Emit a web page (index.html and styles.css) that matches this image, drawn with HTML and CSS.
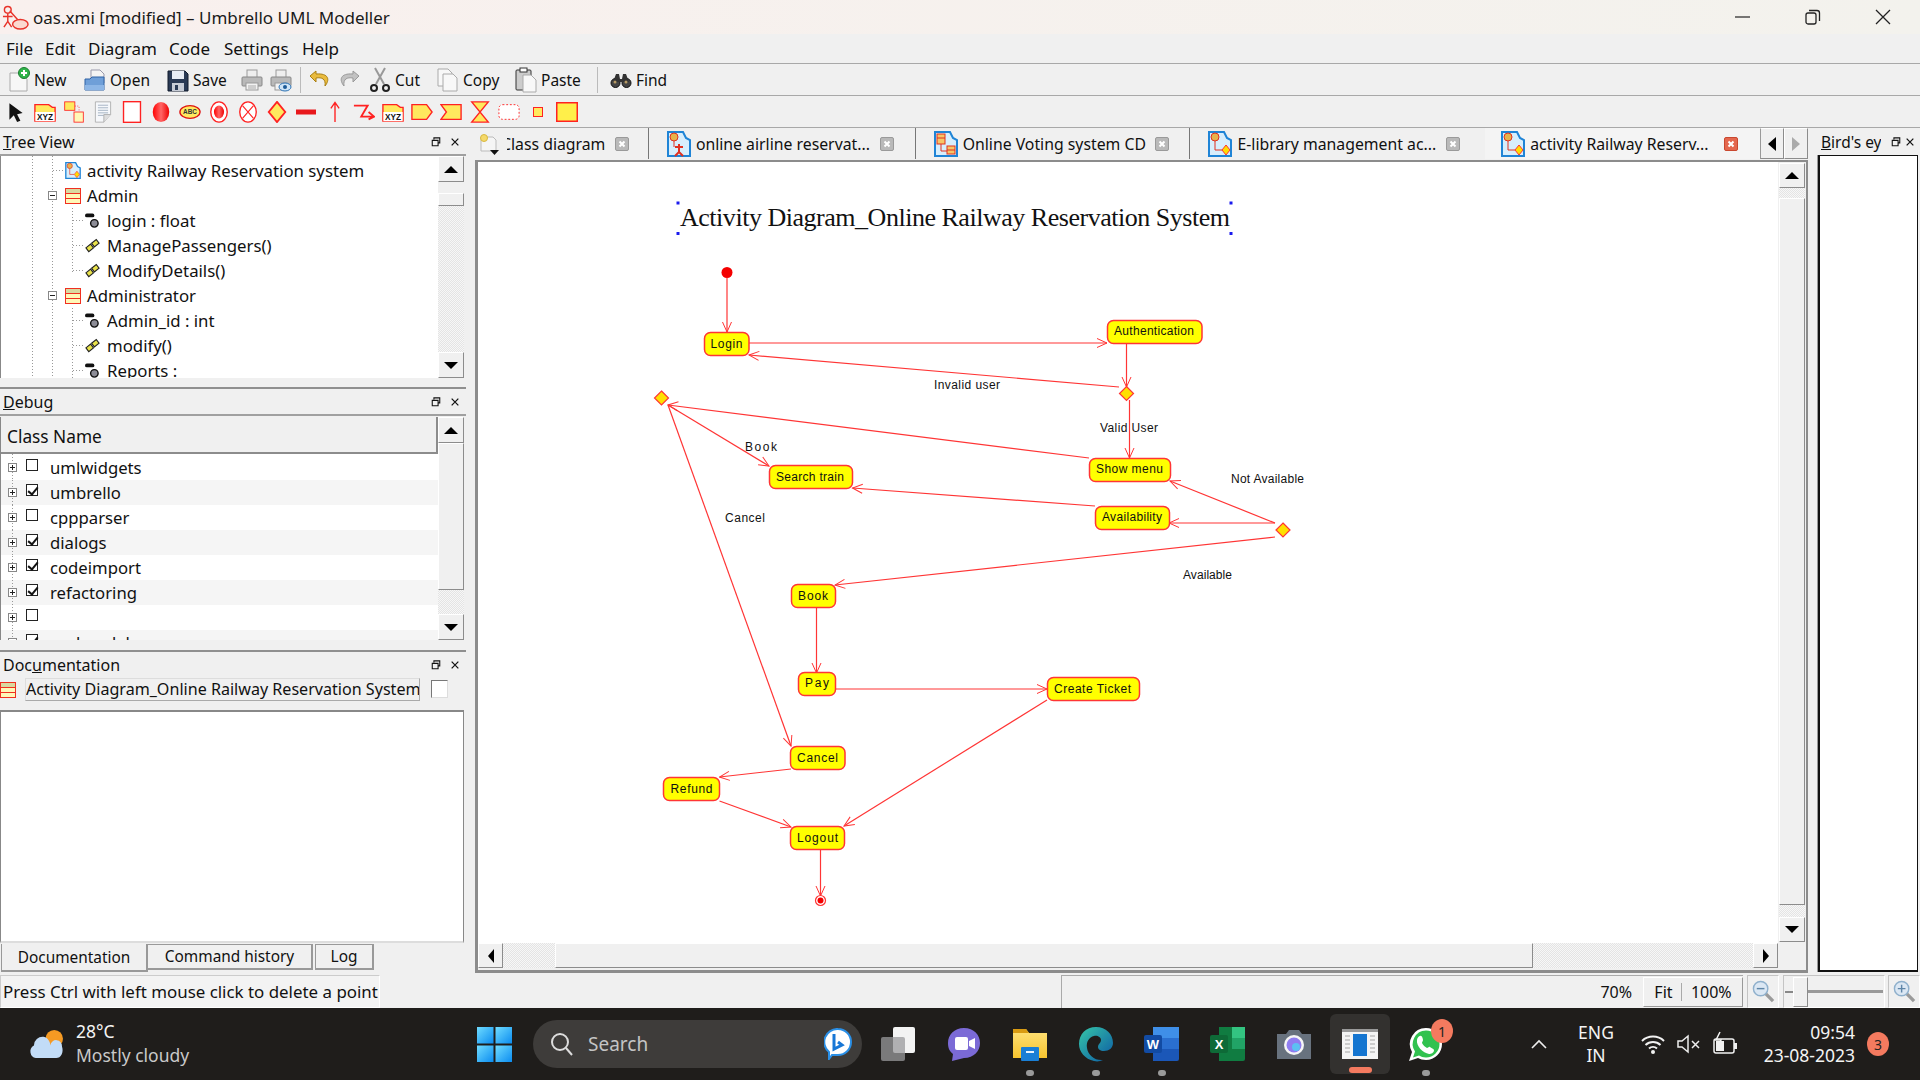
FILE: index.html
```html
<!DOCTYPE html>
<html lang="en">
<head>
<meta charset="utf-8">
<title>oas.xmi [modified] – Umbrello UML Modeller</title>
<link rel="stylesheet" href="styles.css">
</head>
<body>
<svg class="defs" width="0" height="0" aria-hidden="true">
  <defs>
    <linearGradient id="redball" x1="0" x2="1" y1="0" y2="0"><stop offset="0" stop-color="#f00"/><stop offset=".5" stop-color="#f66"/><stop offset="1" stop-color="#e00"/></linearGradient>
    <linearGradient id="folder" x1="0" x2="0" y1="0" y2="1"><stop offset="0" stop-color="#ffe27a"/><stop offset="1" stop-color="#f7c42f"/></linearGradient>
    <linearGradient id="edge" x1="0" x2="1" y1="0" y2="1"><stop offset="0" stop-color="#36c7a8"/><stop offset="1" stop-color="#0c59a4"/></linearGradient>
    <linearGradient id="winlogo" x1="0" x2="1" y1="0" y2="1"><stop offset="0" stop-color="#6fdcff"/><stop offset="1" stop-color="#0b8cf0"/></linearGradient>
    <symbol id="i-activity" viewBox="0 0 24 26">
      <path d="M1 1h15l3 6 4 2v16H1z" fill="#d8eefc" stroke="#1f84d6" stroke-width="2"/>
      <circle cx="7" cy="6" r="4" fill="#e8b34a" stroke="#e03020"/><path d="M7 10v9h7" fill="none" stroke="#e03020"/>
      <path d="M18 14l4 5-4 5-4-5z" fill="#fd0" stroke="#f33"/>
    </symbol>
    <symbol id="i-airline" viewBox="0 0 24 26">
      <path d="M1 1h15l3 6 4 2v16H1z" fill="#d8eefc" stroke="#1f84d6" stroke-width="2"/>
      <circle cx="7" cy="6" r="4" fill="#e8b34a" stroke="#e03020"/><path d="M7 10v6" fill="none" stroke="#e03020"/>
      <path d="M12 13v8M8 16h8M12 21l-4 4M12 21l4 4" fill="none" stroke="#e03020" stroke-width="2"/>
    </symbol>
    <symbol id="i-classdiag" viewBox="0 0 24 26">
      <path d="M1 1h15l3 6 4 2v16H1z" fill="#d8eefc" stroke="#1f84d6" stroke-width="2"/>
      <rect x="3" y="3" width="8" height="10" fill="#f6c667" stroke="#e03020"/><path d="M3 7h8M7 13v7h6" fill="none" stroke="#e03020"/>
      <rect x="13" y="15" width="8" height="8" fill="#f6c667" stroke="#e03020"/><path d="M13 19h8" stroke="#e03020"/>
    </symbol>
    <symbol id="i-class" viewBox="0 0 16 16">
      <rect x=".5" y=".5" width="15" height="15" fill="#fff8b8" stroke="#f03020"/>
      <rect x="1" y="1" width="14" height="4" fill="#d9d9a0"/><path d="M1 5.500h14M1 10.500h14" stroke="#f03020"/>
    </symbol>
    <symbol id="i-attr" viewBox="0 0 16 16">
      <rect x="0" y="0" width="10" height="4" rx="2" fill="#111"/><circle cx="10" cy="10.500" r="4" fill="#8c8c96" stroke="#111" stroke-width="1.500"/>
    </symbol>
    <symbol id="i-op" viewBox="0 0 16 16">
      <path d="M1 10l5-4 3 4-5 4z" fill="#e9e24a" stroke="#222" stroke-width="1.200"/><path d="M7 5l5-4 3 4-5 4z" fill="#e9e24a" stroke="#222" stroke-width="1.200"/>
    </symbol>
    <symbol id="i-xyz" viewBox="0 0 24 22">
      <path d="M1 3h15l4 3h3v15H1z" fill="#ffe95e" stroke="#f22" stroke-width="1.500"/>
      <rect x="1.500" y="11" width="21" height="10" fill="#fff"/>
      <text x="12" y="19.500" class="xyz">XYZ</text>
    </symbol>
    <symbol id="i-close" viewBox="0 0 14 14">
      <rect x=".5" y=".5" width="13" height="13" rx="1.500" fill="#b9b9b9" stroke="#9a9a9a"/>
      <path d="M4.500 4.500l5 5M9.500 4.500l-5 5" stroke="#fff" stroke-width="2"/>
    </symbol>
    <symbol id="i-float" viewBox="0 0 12 12">
      <path d="M3.500 3V1h7v6H8.500M1.500 4h7v6.500h-7z" fill="none" stroke="#111" stroke-width="1.300"/>
    </symbol>
    <symbol id="i-x" viewBox="0 0 12 12">
      <path d="M2 2l8 8M10 2l-8 8" stroke="#111" stroke-width="1.500"/>
    </symbol>
  </defs>
</svg>

<header class="titlebar">
  <svg class="app-icon" viewBox="0 0 28 28"><circle cx="6" cy="6" r="3.500" fill="none" stroke="#e8332a" stroke-width="1.500"/><path d="M6 10v8M1 13h10M6 18l-4 6M6 18l4 6M8 7l9 10" fill="none" stroke="#e8332a" stroke-width="1.500"/><ellipse cx="19" cy="21" rx="8" ry="5" fill="#fbd9d0" stroke="#e8332a" stroke-width="1.500"/></svg>
  <span class="title-text">oas.xmi [modified] – Umbrello UML Modeller</span>
  <div class="winbtns">
    <svg class="winbtn" viewBox="0 0 16 16"><path d="M0 8h15" stroke="#222" stroke-width="1.200"/></svg>
    <svg class="winbtn" viewBox="0 0 16 16"><rect x="1" y="4" width="10" height="11" rx="2" fill="none" stroke="#222" stroke-width="1.300"/><path d="M4 1.500h8a2.500 2.500 0 0 1 2.500 2.500v8" fill="none" stroke="#222" stroke-width="1.300"/></svg>
    <svg class="winbtn" viewBox="0 0 16 16"><path d="M1 1l14 14M15 1L1 15" stroke="#222" stroke-width="1.300"/></svg>
  </div>
</header>

<nav class="menubar">
  <span class="m-file">File</span><span class="m-edit">Edit</span><span class="m-diagram">Diagram</span><span class="m-code">Code</span><span class="m-settings">Settings</span><span>Help</span>
</nav>

<div class="toolbar">
  <div class="tb w76"><svg class="tbi" viewBox="0 0 22 26"><path d="M2 6h11l6 6v12H2z" fill="#f7f7f7" stroke="#aaa"/><circle cx="16" cy="6" r="5.500" fill="#2fb44a" stroke="#1a7d2f"/><path d="M13 6h6M16 3v6" stroke="#fff" stroke-width="2"/></svg><span>New</span></div>
  <div class="tb w83"><svg class="tbi" viewBox="0 0 22 26"><path d="M7 3h9l4 4v9H7z" fill="#f4f4f4" stroke="#99a"/><path d="M1 12h5l2-2h12v13H1z" fill="#6f9fd8" stroke="#2f62a5"/><path d="M1 18h19v5H1z" fill="#8db6e6"/></svg><span>Open</span></div>
  <div class="tb w74"><svg class="tbi" viewBox="0 0 22 26"><path d="M1 4h17l3 3v17H1z" fill="#2a3a55" stroke="#111b2c"/><rect x="5" y="4" width="12" height="8" fill="#e8edf5"/><rect x="5" y="16" width="12" height="8" fill="#c7ccd6"/><rect x="8" y="18" width="3" height="5" fill="#2a3a55"/></svg><span>Save</span></div>
  <div class="tb w29"><svg class="tbi" viewBox="0 0 22 26"><rect x="6" y="3" width="10" height="8" fill="#eee" stroke="#999"/><rect x="1" y="10" width="20" height="9" rx="1" fill="#b9b9b9" stroke="#888"/><rect x="5" y="16" width="12" height="7" fill="#f2f2f2" stroke="#999"/><path d="M7 19h8M7 21h8" stroke="#aaa"/></svg></div>
  <div class="tb w30"><svg class="tbi" viewBox="0 0 22 26"><rect x="6" y="3" width="10" height="8" fill="#eee" stroke="#999"/><rect x="1" y="10" width="20" height="9" rx="1" fill="#b9b9b9" stroke="#888"/><rect x="5" y="16" width="12" height="7" fill="#f2f2f2" stroke="#999"/><ellipse cx="15" cy="20" rx="6" ry="4" fill="#cfe4f6" stroke="#2b72b5"/><circle cx="15" cy="20" r="2" fill="#1d5a96"/></svg></div>
  <div class="tb-sep"></div>
  <div class="tb w29"><svg class="tbi" viewBox="0 0 22 26"><path d="M7 4L1 9l6 6v-4c6-1 10 1 9 8 5-6 4-13-9-12z" fill="#e9bb3e" stroke="#a97f12"/></svg></div>
  <div class="tb w31"><svg class="tbi" viewBox="0 0 22 26"><path d="M15 4l6 5-6 6v-4C9 10 5 12 6 19 1 13 2 6 15 7z" fill="#c2c2c2" stroke="#999"/></svg></div>
  <div class="tb w68"><svg class="tbi" viewBox="0 0 22 26"><path d="M6 1l9 16M16 1L7 17" stroke="#999" stroke-width="2"/><circle cx="5" cy="21" r="3" fill="none" stroke="#222" stroke-width="2"/><circle cx="17" cy="21" r="3" fill="none" stroke="#222" stroke-width="2"/></svg><span>Cut</span></div>
  <div class="tb w78"><svg class="tbi" viewBox="0 0 22 26"><path d="M1 2h10l4 4v13H1z" fill="#f8f8f8" stroke="#aaa"/><path d="M6 7h10l4 4v13H6z" fill="#f8f8f8" stroke="#aaa"/></svg><span>Copy</span></div>
  <div class="tb w82"><svg class="tbi" viewBox="0 0 22 26"><rect x="1" y="3" width="15" height="20" rx="1" fill="#ccc" stroke="#333"/><rect x="5" y="1" width="7" height="4" fill="#fff" stroke="#333"/><path d="M8 8h8l5 5v12H8z" fill="#f8f8f8" stroke="#aaa"/></svg><span>Paste</span></div>
  <div class="tb-sep"></div>
  <div class="tb w70"><svg class="tbi" viewBox="0 0 22 26"><circle cx="5.500" cy="16" r="4.500" fill="#444" stroke="#111"/><circle cx="16.500" cy="16" r="4.500" fill="#444" stroke="#111"/><path d="M3 15l3-8h3l1 5h2l1-5h3l3 8" fill="#333"/><circle cx="5" cy="15" r="1.500" fill="#b79a64"/><circle cx="16" cy="15" r="1.500" fill="#b79a64"/></svg><span>Find</span></div>
</div>

<div class="toolbar two">
  <div class="tool"><svg viewBox="0 0 16 20" class="ti"><path d="M2 2l12 9-5 1 3 6-3 1-3-6-4 4z" fill="#111"/></svg></div>
  <div class="tool"><svg class="ti"><use href="#i-xyz"/></svg></div>
  <div class="tool"><svg viewBox="0 0 24 26" class="ti"><rect x="1" y="1" width="12" height="10" fill="#ffe95e" stroke="#f22"/><rect x="12" y="13" width="11" height="12" fill="#fff8b8" stroke="#f22"/><path d="M13 6h5v7" fill="none" stroke="#f22" stroke-dasharray="1 2"/></svg></div>
  <div class="tool"><svg viewBox="0 0 20 26" class="ti"><path d="M1 1h18v15l-8 9H1z" fill="#f6f8fb" stroke="#aaa"/><path d="M4 5h12M4 8h12M4 11h12M4 14h12M4 17h7" stroke="#9ab"/><path d="M19 16h-8v9" fill="#ddd" stroke="#aaa"/></svg></div>
  <div class="tool"><svg viewBox="0 0 20 24" class="ti"><rect x=".75" y=".75" width="18.500" height="22.500" fill="#fff" stroke="#f22" stroke-width="1.500"/></svg></div>
  <div class="tool"><svg viewBox="0 0 20 24" class="ti"><ellipse cx="10" cy="12" rx="9" ry="11" fill="url(#redball)"/></svg></div>
  <div class="tool"><svg viewBox="0 0 24 16" class="ti"><ellipse cx="12" cy="8" rx="11" ry="7" fill="#ffe95e" stroke="#d11" stroke-width="1.500"/><text x="12" y="10.500" class="abc">ABC</text></svg></div>
  <div class="tool"><svg viewBox="0 0 20 24" class="ti"><ellipse cx="10" cy="12" rx="9" ry="11" fill="#fff" stroke="#f22" stroke-width="1.500"/><ellipse cx="10" cy="12" rx="5.500" ry="7" fill="url(#redball)"/></svg></div>
  <div class="tool"><svg viewBox="0 0 20 24" class="ti"><ellipse cx="10" cy="12" rx="9" ry="11" fill="#fff" stroke="#f22" stroke-width="1.500"/><path d="M4 5l12 14M16 5L4 19" stroke="#f22" stroke-width="1.200"/></svg></div>
  <div class="tool"><svg viewBox="0 0 20 24" class="ti"><path d="M10 1l9 11-9 11L1 12z" fill="#ffe95e" stroke="#f22" stroke-width="2"/></svg></div>
  <div class="tool"><svg viewBox="0 0 20 8" class="ti-bar"><rect width="20" height="5" y="1.500" fill="#e8181c"/></svg></div>
  <div class="tool"><svg viewBox="0 0 12 24" class="ti"><path d="M6 23V2M1.500 8L6 1.500 10.500 8" fill="none" stroke="#f22" stroke-width="1.500"/></svg></div>
  <div class="tool"><svg viewBox="0 0 24 18" class="ti"><path d="M1 2h15l-7 12h13M17 9l6 5-6 3" fill="none" stroke="#f22" stroke-width="2"/></svg></div>
  <div class="tool"><svg class="ti"><use href="#i-xyz"/></svg></div>
  <div class="tool"><svg viewBox="0 0 24 18" class="ti"><path d="M1 1h16l6 8-6 8H1z" fill="#ffe95e" stroke="#f22" stroke-width="1.500"/></svg></div>
  <div class="tool"><svg viewBox="0 0 24 18" class="ti"><path d="M1 1h22v16H1l6-8z" fill="#ffe95e" stroke="#f22" stroke-width="1.500"/></svg></div>
  <div class="tool"><svg viewBox="0 0 20 24" class="ti"><path d="M1 1h18L1 23h18z" fill="#ffe95e" stroke="#f22" stroke-width="1.500"/></svg></div>
  <div class="tool"><svg viewBox="0 0 24 18" class="ti"><rect x="1" y="1" width="22" height="16" rx="4" fill="#fff" stroke="#f22" stroke-dasharray="2 2"/></svg></div>
  <div class="tool"><svg viewBox="0 0 10 10" class="ti-small"><rect x=".5" y=".5" width="9" height="9" fill="#ffe95e" stroke="#f22"/></svg></div>
  <div class="tool"><svg viewBox="0 0 22 20" class="ti"><rect x=".75" y=".75" width="20.500" height="18.500" fill="#ffef4a" stroke="#f22" stroke-width="1.500"/></svg></div>
</div>

<main class="workspace">
  <aside class="leftcol">
    <section class="dock dock-tree">
      <div class="dock-head"><span class="dock-title"><u>T</u>ree View</span><svg class="dh-i"><use href="#i-float"/></svg><svg class="dh-i"><use href="#i-x"/></svg></div>
      <div class="listbox treebox">
        <div class="listbody tree">
          <div class="tr l1"><i class="tick"></i><svg class="ic"><use href="#i-activity"/></svg><span>activity Railway Reservation system</span></div>
          <div class="tr l1"><b class="exp minus"></b><svg class="ic ic-c"><use href="#i-class"/></svg><span>Admin</span></div>
          <div class="group short">
            <div class="tr l2"><i class="tick"></i><svg class="ic2"><use href="#i-attr"/></svg><span>login : float</span></div>
            <div class="tr l2"><i class="tick"></i><svg class="ic2"><use href="#i-op"/></svg><span>ManagePassengers()</span></div>
            <div class="tr l2"><i class="tick"></i><svg class="ic2"><use href="#i-op"/></svg><span>ModifyDetails()</span></div>
          </div>
          <div class="tr l1"><b class="exp minus"></b><svg class="ic ic-c"><use href="#i-class"/></svg><span>Administrator</span></div>
          <div class="group">
            <div class="tr l2"><i class="tick"></i><svg class="ic2"><use href="#i-attr"/></svg><span>Admin_id : int</span></div>
            <div class="tr l2"><i class="tick"></i><svg class="ic2"><use href="#i-op"/></svg><span>modify()</span></div>
            <div class="tr l2"><i class="tick"></i><svg class="ic2"><use href="#i-attr"/></svg><span>Reports :</span></div>
          </div>
        </div>
        <div class="vbar"><div class="sb-btn up"></div><div class="gap-12"></div><div class="thumb thumb-tree"></div><div class="hatch"></div><div class="sb-btn down"></div></div>
      </div>
    </section>

    <section class="dock dock-debug">
      <div class="dock-head"><span class="dock-title"><u>D</u>ebug</span><svg class="dh-i"><use href="#i-float"/></svg><svg class="dh-i"><use href="#i-x"/></svg></div>
      <div class="listbox debugbox">
        <div class="listbody">
          <div class="colhead">Class Name</div>
          <div class="debugrows">
            <div class="dr"><b class="exp plus"></b><i class="cb"></i><span>umlwidgets</span></div>
            <div class="dr alt"><b class="exp plus"></b><i class="cb on"></i><span>umbrello</span></div>
            <div class="dr"><b class="exp plus"></b><i class="cb"></i><span>cppparser</span></div>
            <div class="dr alt"><b class="exp plus"></b><i class="cb on"></i><span>dialogs</span></div>
            <div class="dr"><b class="exp plus"></b><i class="cb on"></i><span>codeimport</span></div>
            <div class="dr alt"><b class="exp plus"></b><i class="cb on"></i><span>refactoring</span></div>
            <div class="dr"><b class="exp plus"></b><i class="cb"></i><span></span></div>
            <div class="dr alt"><b class="exp plus"></b><i class="cb on"></i><span>umlmodel</span></div>
          </div>
        </div>
        <div class="vbar"><div class="sb-btn up"></div><div class="thumb thumb-debug"></div><div class="hatch"></div><div class="sb-btn down"></div></div>
      </div>
    </section>

    <section class="dock dock-doc">
      <div class="dock-head"><span class="dock-title">Doc<u>u</u>mentation</span><svg class="dh-i"><use href="#i-float"/></svg><svg class="dh-i"><use href="#i-x"/></svg></div>
      <div class="docline"><svg class="ic-doc"><use href="#i-class"/></svg><span class="docfield">Activity Diagram_Online Railway Reservation System</span><i class="doccheck"></i></div>
      <div class="docbox"></div>
      <div class="bottomtabs"><span class="btab active">Documentation</span><span class="btab ch">Command history</span><span class="btab log">Log</span></div>
    </section>
  </aside>

  <section class="center">
    <div class="tabbar">
      <div class="dtab t1"><span class="dtab-text">Class diagram</span><svg class="cl"><use href="#i-close"/></svg>
        <div class="corner"><svg viewBox="0 0 22 22" class="corner-i"><path d="M2 4h12l3 3v11H2z" fill="#f5f5f5" stroke="#bbb"/><circle cx="5" cy="5" r="3.500" fill="#f5d96a" stroke="#d8b840"/><path d="M11 17h9l-4.500 5z" fill="#111"/></svg></div>
      </div>
      <div class="dtab t2"><svg class="di"><use href="#i-airline"/></svg><span class="dtab-text">online airline reservat...</span><svg class="cl"><use href="#i-close"/></svg></div>
      <div class="dtab t3"><svg class="di"><use href="#i-classdiag"/></svg><span class="dtab-text">Online Voting system CD</span><svg class="cl"><use href="#i-close"/></svg></div>
      <div class="dtab t4"><svg class="di"><use href="#i-activity"/></svg><span class="dtab-text">E-library management ac...</span><svg class="cl"><use href="#i-close"/></svg></div>
      <div class="dtab t5"><svg class="di"><use href="#i-activity"/></svg><span class="dtab-text">activity Railway Reserv...</span><svg class="cl red" viewBox="0 0 14 14"><rect x=".5" y=".5" width="13" height="13" rx="1.500" fill="#e4674e" stroke="#c9482f"/><path d="M4.500 4.500l5 5M9.500 4.500l-5 5" stroke="#fff" stroke-width="2"/></svg></div>
      <div class="tabnav"><div class="navbtn"><i class="tri-l"></i></div><div class="navbtn"><i class="tri-r off"></i></div></div>
    </div>
    <div class="canvasframe">
      <div class="canvas">
        <svg class="diagram" viewBox="478 162 1300 781" width="1300" height="781">
          <defs>
            <marker id="arr" markerWidth="12" markerHeight="12" refX="11" refY="6" orient="auto" markerUnits="userSpaceOnUse"><path d="M1 1.500L11 6 1 10.500" fill="none" stroke="#ff3535" stroke-width="1"/></marker>
          </defs>
          <text x="680" y="226" class="d-title" textLength="550">Activity Diagram_Online Railway Reservation System</text>
          <g class="handles"><rect x="676.500" y="201.500" width="3" height="3"/><rect x="1229.500" y="201.500" width="3" height="3"/><rect x="676.500" y="232" width="3" height="3"/><rect x="1229.500" y="232" width="3" height="3"/></g>

          <g class="edges">
            <path d="M727 278V332"/><path d="M749 343H1107"/><path d="M1126.500 343V387"/>
            <path d="M1119 387L749 355"/><path d="M1129.500 400V458"/>
            <path d="M1089 458L668 405"/><path d="M668 405L769 466"/>
            <path d="M1095 506L852.500 488"/><path d="M1275 523H1169"/>
            <path d="M1275 523L1170 481"/><path d="M1275 537L835 585"/>
            <path d="M668 405L791 746"/><path d="M816.500 608V673"/>
            <path d="M835.500 689H1047"/><path d="M1047 700L844 826"/>
            <path d="M791 769L719.500 777"/><path d="M719.500 801L791 827"/><path d="M820.500 850V896"/>
          </g>

          <circle cx="727" cy="272.500" r="5.500" class="start"/>
          <circle cx="820.500" cy="900.500" r="5" class="endring"/><circle cx="820.500" cy="900.500" r="3" class="start"/>

          <g class="diamonds">
            <path d="M1126.500 386.500l7 7-7 7-7-7z"/><path d="M661.500 391l7 7-7 7-7-7z"/><path d="M1283 523l7 7-7 7-7-7z"/>
          </g>

          <g class="nodes">
            <rect x="704.500" y="332.500" width="44.500" height="23" rx="6"/>
            <rect x="1107.500" y="320.500" width="94.500" height="23" rx="6"/>
            <rect x="1089.500" y="458.500" width="81" height="23" rx="6"/>
            <rect x="769.500" y="465.500" width="83" height="23" rx="6"/>
            <rect x="1095.500" y="506.500" width="74" height="23" rx="6"/>
            <rect x="791.500" y="584.500" width="44" height="23" rx="6"/>
            <rect x="798.500" y="672.500" width="37" height="23" rx="6"/>
            <rect x="1047.500" y="677.500" width="92" height="23" rx="6"/>
            <rect x="790.500" y="746.500" width="54.500" height="23" rx="6"/>
            <rect x="663.500" y="777.500" width="56" height="23" rx="6"/>
            <rect x="790.500" y="826.500" width="54" height="23" rx="6"/>
          </g>

          <g class="labels">
            <text x="710.500" y="348" textLength="32">Login</text>
            <text x="1114" y="335" textLength="80">Authentication</text>
            <text x="1096" y="473" textLength="67">Show menu</text>
            <text x="776" y="481" textLength="68">Search train</text>
            <text x="1102" y="521" textLength="60">Availability</text>
            <text x="798" y="600" textLength="30">Book</text>
            <text x="805" y="687" textLength="24">Pay</text>
            <text x="1054" y="693" textLength="77">Create Ticket</text>
            <text x="797" y="762" textLength="41">Cancel</text>
            <text x="670.500" y="793" textLength="42">Refund</text>
            <text x="797" y="842" textLength="41">Logout</text>
            <text x="934" y="389" textLength="66">Invalid user</text>
            <text x="1100" y="432" textLength="58">Valid User</text>
            <text x="745" y="451" textLength="32">Book</text>
            <text x="725" y="522" textLength="40">Cancel</text>
            <text x="1231" y="483" textLength="73">Not Available</text>
            <text x="1183" y="579" textLength="49">Available</text>
          </g>
        </svg>
      </div>
      <div class="vbar vbar-main"><div class="sb-btn up"></div><div class="hatch hatch-top"></div><div class="thumb thumb-main"></div><div class="hatch hatch-bottom"></div><div class="sb-btn down"></div></div>
      <div class="hbar"><div class="hbtn"><i class="tri-l small"></i></div><div class="hatch-h"></div><div class="hthumb"></div><div class="hatch-h right"></div><div class="hbtn"><i class="tri-r small"></i></div></div>
    </div>
  </section>

  <aside class="bird">
    <div class="dock-head bird-head"><span class="dock-title bird-title"><u>B</u>ird's ey</span><svg class="dh-i"><use href="#i-float"/></svg><svg class="dh-i"><use href="#i-x"/></svg></div>
    <div class="birdbox"></div>
  </aside>
</main>

<footer class="statusbar">
  <div class="status-msg">Press Ctrl with left mouse click to delete a point</div>
  <div class="status-zoom">
    <span class="pct">70%</span>
    <div class="fitbox"><span>Fit</span><i></i><span>100%</span></div>
  </div>
  <div class="sbox magbox"><svg class="mag" viewBox="0 0 24 24"><path d="M14 14l8 8" stroke="#9a9a9a" stroke-width="3.500"/><circle cx="9" cy="9" r="7.500" fill="#dbe7f3" stroke="#8fb0cc" stroke-width="1.500"/><path d="M5 9h8" stroke="#5f86a8" stroke-width="1.500"/></svg></div>
  <div class="sbox slider"><i class="slider-minus"></i><i class="slider-handle"></i><i class="slider-line"></i></div>
  <div class="sbox magbox"><svg class="mag" viewBox="0 0 24 24"><path d="M14 14l8 8" stroke="#9a9a9a" stroke-width="3.500"/><circle cx="9" cy="9" r="7.500" fill="#dbe7f3" stroke="#8fb0cc" stroke-width="1.500"/><path d="M5 9h8M9 5v8" stroke="#5f86a8" stroke-width="1.500"/></svg></div>
</footer>

<div class="taskbar">
  <div class="weather">
    <svg class="w-icon" viewBox="0 0 38 32"><circle cx="27" cy="10" r="9" fill="#f59a23"/><path d="M8 30a7 7 0 0 1-2-13 9 9 0 0 1 10-9c5 1 7 6 7 9a6 6 0 0 1 12 1c2 6-1 12-6 12z" fill="#c2dcf7"/></svg>
    <div class="w-text"><span>28°C</span><span class="w-desc">Mostly cloudy</span></div>
  </div>
  <svg class="winlogo" viewBox="0 0 35 35"><rect width="16.500" height="16.500" fill="url(#winlogo)"/><rect x="18.500" width="16.500" height="16.500" fill="url(#winlogo)"/><rect y="18.500" width="16.500" height="16.500" fill="url(#winlogo)"/><rect x="18.500" y="18.500" width="16.500" height="16.500" fill="url(#winlogo)"/></svg>
  <div class="searchpill">
    <svg class="s-icon" viewBox="0 0 24 24"><circle cx="10" cy="10" r="8" fill="none" stroke="#ddd" stroke-width="2"/><path d="M16 16l6 7" stroke="#ddd" stroke-width="2"/></svg>
    <span class="s-text">Search</span>
    <svg class="s-bing" viewBox="0 0 28 32"><path d="M14 1a13 13 0 0 1 0 26H8l-3 4v-7A13 13 0 0 1 14 1z" fill="#fff" stroke="#2a8fe6" stroke-width="2"/><path d="M10 6v15l8-4-4-3" fill="none" stroke="#1877d6" stroke-width="3"/></svg>
  </div>
  <div class="apps">
    <div class="app"><svg class="a-i" viewBox="0 0 36 36"><rect x="13" y="1" width="22" height="26" rx="2" fill="#f3f3f3"/><rect x="1" y="11" width="24" height="24" rx="2" fill="#9a9a9c" opacity=".75"/></svg></div>
    <div class="app"><svg class="a-i" viewBox="0 0 36 36"><path d="M18 2c10 0 16 7 16 15s-6 15-16 15l-12 3 1-7C3 25 2 21 2 17 2 9 8 2 18 2z" fill="#7b6ad6"/><rect x="9" y="11" width="13" height="13" rx="2" fill="#fff"/><path d="M23 15l6-3v11l-6-3z" fill="#fff"/></svg></div>
    <div class="app dotted"><svg class="a-i" viewBox="0 0 36 36"><path d="M1 3h13l3 4h18v25H1z" fill="url(#folder)"/><path d="M1 3h13l3 4H1z" fill="#d99b12"/><rect x="9" y="21" width="18" height="14" rx="1" fill="#1a7fd6"/><path d="M14 26h8" stroke="#e6f2fc" stroke-width="2"/></svg></div>
    <div class="app dotted"><svg class="a-i" viewBox="0 0 36 36"><path d="M18 1c10 0 17 7 17 16 0 5-4 8-9 8-4 0-6-2-6-4 0-3 3-4 3-7 0-3-4-5-7-4-5 1-8 6-7 12 1 7 8 13 16 12-3 1-5 2-9 1C7 33 1 26 1 18 1 8 8 1 18 1z" fill="url(#edge)"/></svg></div>
    <div class="app dotted"><svg class="a-i" viewBox="0 0 36 36"><path d="M9 1h24a2 2 0 0 1 2 2v30a2 2 0 0 1-2 2H9z" fill="#1b57b8"/><path d="M9 1h26v11H9z" fill="#3f8fe8"/><path d="M9 12h26v11H9z" fill="#2a6fd0"/><rect x="0" y="9" width="18" height="18" rx="2" fill="#124ba3"/><text x="9" y="23" class="ms-letter">W</text></svg></div>
    <div class="app"><svg class="a-i" viewBox="0 0 36 36"><path d="M9 1h24a2 2 0 0 1 2 2v30a2 2 0 0 1-2 2H9z" fill="#107c41"/><path d="M22 1h13v11H22z" fill="#33c481"/><path d="M22 12h13v11H22z" fill="#21a366"/><rect x="0" y="9" width="18" height="18" rx="2" fill="#0e6a37"/><text x="9" y="23" class="ms-letter">X</text></svg></div>
    <div class="app"><svg class="a-i" viewBox="0 0 36 36"><path d="M1 8h9l3-4h10l3 4h9v25H1z" fill="#68727e"/><circle cx="18" cy="19" r="10" fill="#f5f5f5"/><circle cx="18" cy="19" r="7.500" fill="#8f7df0"/><circle cx="20" cy="21" r="4" fill="#5cc0f2"/></svg></div>
    <div class="app active"><svg class="a-i" viewBox="0 0 36 30"><rect width="36" height="30" fill="#f4f4f4"/><rect y="0" width="36" height="3" fill="#9a9a9a"/><rect x="11" y="5" width="14" height="22" fill="#1475d0"/><path d="M3 7h5M3 11h5M3 15h5M3 19h5M3 23h5M28 7h5M28 11h5M28 15h5M28 19h5M28 23h5" stroke="#ccc" stroke-width="2"/></svg><i class="pill"></i></div>
    <div class="app dotted"><svg class="a-i" viewBox="0 0 36 36"><path d="M18 2a16 16 0 0 1 0 32c-3 0-6-1-8-2l-9 3 3-9A16 16 0 0 1 18 2z" fill="#fff"/><path d="M18 4.500a13.500 13.500 0 0 1 0 27c-3 0-5-1-7-2l-6 2 2-6a13.500 13.500 0 0 1 11-21z" fill="#31c24f"/><path d="M12 10c2-1 3 3 3 4s-1 2-1 3c1 2 3 4 5 5 1 0 2-2 3-1s4 2 4 3c0 3-3 4-5 4-6-1-13-8-12-14 0-2 2-4 3-4z" fill="#fff"/></svg><span class="app-badge">1</span></div>
  </div>
  <svg class="chev" viewBox="0 0 16 10"><path d="M1 9l7-7 7 7" fill="none" stroke="#eee" stroke-width="1.600"/></svg>
  <div class="lang"><span>ENG</span><span>IN</span></div>
  <svg class="tray-wifi" viewBox="0 0 24 22"><path d="M1 8a16 16 0 0 1 22 0M4.500 12a11 11 0 0 1 15 0M8 15.500a6 6 0 0 1 8 0" fill="none" stroke="#f2f2f2" stroke-width="2"/><circle cx="12" cy="19" r="2" fill="#f2f2f2"/></svg>
  <svg class="tray-vol" viewBox="0 0 24 22"><path d="M1 8h4l6-5v16l-6-5H1z" fill="none" stroke="#eee" stroke-width="1.500"/><path d="M15 8l7 7M22 8l-7 7" stroke="#eee" stroke-width="1.500"/></svg>
  <svg class="tray-bat" viewBox="0 0 26 26"><rect x="2" y="8" width="20" height="14" rx="2" fill="none" stroke="#f2f2f2" stroke-width="1.500"/><rect x="22" y="12" width="3" height="6" fill="#f2f2f2"/><rect x="4" y="10" width="8" height="10" fill="#f2f2f2"/><path d="M8 1L4 9h5l-2 6" fill="none" stroke="#f2f2f2" stroke-width="1.500"/></svg>
  <div class="clock"><span>09:54</span><span>23-08-2023</span></div>
  <span class="notif">3</span>
</div>
</body>
</html>
```
FILE: styles.css
```css
* { box-sizing: border-box; }
html, body { margin: 0; padding: 0; }
body {
  width: 1920px; height: 1080px; overflow: hidden; display: flex; flex-direction: column;
  background: #f0f0f0; color: #111;
  font-family: "Noto Sans", "Open Sans", sans-serif; font-size: 16px;
}
.defs { position: absolute; }
.xyz { font: bold 9px "Liberation Sans", sans-serif; text-anchor: middle; fill: #111; }
.abc { font: bold 7px "Liberation Sans", sans-serif; text-anchor: middle; fill: #333; }

.titlebar { height: 34px; flex: none; display: flex; align-items: center; background: linear-gradient(90deg, #f9f0ee, #f3f2ed); }
.app-icon { width: 27px; height: 27px; margin-left: 2px; }
.title-text { margin-left: 4px; font-size: 17px; color: #1a1a1a; }
.winbtns { margin-left: auto; display: flex; gap: 54px; margin-right: 29px; }
.winbtn { width: 16px; height: 16px; }

.menubar { height: 30px; flex: none; display: flex; align-items: center; padding-left: 6px; border-bottom: 1px solid #a8a8a8; font-size: 17px; }
.menubar span { display: block; }
.m-file { width: 39px; } .m-edit { width: 43px; } .m-diagram { width: 81px; } .m-code { width: 55px; } .m-settings { width: 78px; }

.toolbar { height: 32px; flex: none; display: flex; align-items: center; padding-left: 8px; border-bottom: 1px solid #a8a8a8; font-size: 15.5px; }
.tb { display: flex; align-items: center; gap: 4px; height: 28px; }
.tbi { width: 22px; height: 26px; flex: none; }
.w76 { width: 76px; } .w83 { width: 83px; } .w74 { width: 74px; } .w29 { width: 29px; } .w30 { width: 30px; }
.w31 { width: 31px; } .w68 { width: 68px; } .w78 { width: 78px; } .w82 { width: 82px; } .w70 { width: 70px; }
.tb-sep { width: 1px; height: 26px; background: #bbb; margin-right: 8px; }
.tb-sep + .w70 { margin-left: 4px; }
.toolbar.two { padding-left: 1px; }
.tool { width: 29px; height: 30px; display: flex; align-items: center; justify-content: center; }
.ti { width: 22px; height: 22px; }
.ti-bar { width: 20px; height: 8px; }
.ti-small { width: 10px; height: 10px; }

.workspace { height: 847px; flex: none; display: flex; }
.leftcol { width: 466px; flex: none; display: flex; flex-direction: column; }
.dock { flex: none; display: flex; flex-direction: column; }
.dock-tree { height: 259px; }
.dock-debug { height: 263px; border-top: 2px solid #8f8f8f; }
.dock-doc { flex: 1; border-top: 2px solid #8f8f8f; }
.dock-head { height: 27px; flex: none; display: flex; align-items: center; padding: 0 6px 0 3px; gap: 6px; border-bottom: 2px solid #a0a0a0; font-size: 16px; }
.dock-tree .dock-head { height: 28px; padding-top: 1px; }
.dock-doc .dock-head { border-bottom: 0; height: 26px; }
.dock-title { margin-right: auto; }
.dh-i { width: 10px; height: 10px; margin-left: 3px; }

.listbox { display: flex; overflow: hidden; background: #fff; border-left: 1px solid #888; margin-right: 2px; }
.treebox { height: 222px; }
.debugbox { height: 223px; margin-top: 1px; }
.listbody { flex: 1; min-width: 0; overflow: hidden; }
.tree {
  padding-top: 2px;
  background:
    repeating-linear-gradient(#999 0 1px, transparent 1px 3px) 31px 0 / 1px 100% no-repeat,
    repeating-linear-gradient(#999 0 1px, transparent 1px 3px) 51px 0 / 1px 100% no-repeat;
}
.tr { height: 25px; display: flex; align-items: center; font-size: 16.8px; white-space: nowrap; position: relative; }
.tr.l1 { padding-left: 64px; }
.tr.l2 { padding-left: 84px; }
.group { background: repeating-linear-gradient(#999 0 1px, transparent 1px 3px) 71px 0 / 1px 100% no-repeat; }
.group.short { background-size: 1px 64px; }
.tick { position: absolute; left: 52px; top: 12px; width: 11px; height: 1px; background: repeating-linear-gradient(90deg, #999 0 1px, transparent 1px 3px); }
.l2 .tick { left: 72px; width: 10px; }
.ic { width: 16px; height: 17px; flex: none; margin-right: 6px; }
.ic-c { height: 16px; }
.ic2 { width: 15px; height: 16px; flex: none; margin-right: 7px; }
.exp { position: absolute; width: 9px; height: 9px; border: 1px solid #888; background: #fff linear-gradient(#222, #222) center / 5px 1px no-repeat; }
.tr .exp { left: 47px; top: 8px; }
.exp.plus { background: linear-gradient(#222, #222) center / 5px 1px no-repeat, linear-gradient(#222, #222) center / 1px 5px no-repeat, #fff; }

.vbar { width: 26px; flex: none; display: flex; flex-direction: column; background: #f0f0f0; }
.hatch { flex: 1; background: repeating-conic-gradient(#e4e4e4 0 25%, #f7f7f7 0 50%) 0 0 / 2px 2px; }
.sb-btn { height: 26px; flex: none; background: #f0f0f0; border: 1px solid; border-color: #fff #8c8c8c #8c8c8c #fff; display: flex; align-items: center; justify-content: center; }
.sb-btn::before { content: ""; border-left: 7px solid transparent; border-right: 7px solid transparent; }
.sb-btn.up::before { border-bottom: 7px solid #000; }
.sb-btn.down::before { border-top: 7px solid #000; }
.gap-12 { height: 11px; flex: none; background: #f0f0f0; }
.thumb { background: #f0f0f0; border: 1px solid; border-color: #fff #8c8c8c #8c8c8c #fff; flex: none; }
.thumb-tree { height: 13px; }
.thumb-debug { height: 147px; }
.thumb-main { flex: 1; }

.colhead { height: 37px; display: flex; align-items: center; padding: 3px 0 0 6px; background: #f0f0f0; border-right: 2px solid #8c8c8c; border-bottom: 2px solid #8c8c8c; font-size: 17.3px; }
.debugrows { padding-top: 1px; background: repeating-linear-gradient(#999 0 1px, transparent 1px 3px) 11px 0 / 1px 100% no-repeat; }
.dr { height: 25px; display: flex; align-items: center; position: relative; font-size: 16.7px; padding-left: 25px; }
.dr.alt { background: repeating-linear-gradient(#999 0 1px, transparent 1px 3px) 11px 0 / 1px 100% no-repeat, #f5f5f5; }
.dr .exp { left: 7px; top: 8px; }
.cb { width: 12px; height: 12px; border: 1px solid #222; background: #fff; flex: none; margin-right: 12px; margin-top: -5px; position: relative; }
.cb.on::after { content: ""; position: absolute; left: 3px; top: 0; width: 4px; height: 8px; border: solid #111; border-width: 0 2px 2px 0; transform: rotate(40deg); }

.docline { height: 32px; flex: none; display: flex; align-items: flex-start; }
.ic-doc { width: 16px; height: 16px; flex: none; margin-top: 4px; }
.docfield { margin-left: 9px; width: 395px; height: 23px; border: 1px solid; border-color: #ddd #aaa #aaa #ddd; font-size: 16.1px; line-height: 21px; white-space: nowrap; overflow: hidden; }
.doccheck { margin: 2px 0 0 11px; width: 17px; height: 18px; background: #fff; border: 1px solid; border-color: #777 #ddd #ddd #777; }
.docbox { flex: 1; background: #fff; border: 1px solid #888; border-width: 2px 1px 2px 1px; border-bottom-color: #ddd; margin-right: 2px; }
.bottomtabs { height: 32px; flex: none; display: flex; align-items: flex-start; padding: 1px 0 0 1px; font-size: 15.4px; }
.btab { display: flex; align-items: center; justify-content: center; height: 26px; border: 1px solid #999; border-width: 1px 2px 2px 1px; }
.btab.active { width: 147px; height: 28px; background: #f0f0f0; border-top: 0; }
.btab.ch { width: 165px; border-left: 0; }
.btab.log { width: 59px; margin-left: 2px; }

.center { width: 1334px; margin-left: 8px; flex: none; display: flex; flex-direction: column; padding-bottom: 2px; }
.tabbar { height: 32px; flex: none; display: flex; font-size: 15.8px; }
.dtab { display: flex; align-items: center; height: 31px; padding-top: 1px; border-right: 1px solid #777; white-space: nowrap; position: relative; }
.t1 { width: 175px; padding-left: 27px; gap: 9px; overflow: hidden; }
.t2 { width: 267px; padding-left: 18px; }
.t3 { width: 275px; padding-left: 18px; }
.t4 { width: 295px; padding-left: 18px; border-right: 0; }
.t5 { width: 275px; padding-left: 16px; border-right: 0; background: #f4f4f4; }
.di { width: 24px; height: 26px; flex: none; margin-right: 5px; }
.dtab-text { display: block; }
.t1 .dtab-text { width: 105px; }
.t2 .dtab-text { width: 184px; } .t3 .dtab-text { width: 192px; } .t4 .dtab-text { width: 209px; } .t5 .dtab-text { width: 194px; }
.cl { width: 14px; height: 14px; flex: none; }
.corner { position: absolute; left: 1px; top: 0; width: 32px; height: 31px; background: #f0f0f0; display: flex; align-items: center; padding-left: 4px; }
.corner-i { width: 22px; height: 22px; }
.tabnav { display: flex; width: 48px; flex: none; }
.navbtn { width: 24px; height: 31px; background: #f0f0f0; border: 1px solid; border-color: #fff #8c8c8c #8c8c8c #fff; display: flex; align-items: center; justify-content: center; }
.navbtn:first-child { border-left-color: #999; }
.tri-l, .tri-r { border-top: 7px solid transparent; border-bottom: 7px solid transparent; display: block; }
.tri-l { border-right: 8px solid #000; }
.tri-r { border-left: 8px solid #000; }
.tri-r.off { border-left-color: #aaa; }
.tri-l.small, .tri-r.small { border-top-width: 7px; border-bottom-width: 7px; }
.tri-l.small { border-right-width: 6px; }
.tri-r.small { border-left-width: 6px; }

.canvasframe { flex: 1; margin-left: 1px; display: grid; grid-template-columns: 1300px 28px; grid-template-rows: 781px 27px; border: 2px solid #8c8c8c; border-left-width: 3px; border-bottom-width: 3px; }
.canvas { background: #fff; overflow: hidden; }
.diagram { display: block; }
.d-title { font: 26px "Liberation Serif", serif; fill: #111; }
.handles rect { fill: #1a1aee; }
.edges path { fill: none; stroke: #ff3535; stroke-width: 1.200; marker-end: url(#arr); }
.start { fill: #f40000; }
.endring { fill: #fff; stroke: #f33; stroke-width: 1.200; }
.diamonds path { fill: #ffe000; stroke: #ff3535; stroke-width: 1.200; }
.nodes rect { fill: #ffff00; stroke: #ff3535; stroke-width: 1.500; }
.labels text { font: 12px "Liberation Sans", sans-serif; fill: #111; }
.vbar-main { width: 28px; padding: 1px 1px 1px 1px; }
.vbar-main .sb-btn { height: 25px; }
.hatch-top { flex: none; height: 10px; }
.hatch-bottom { flex: none; height: 12px; }
.hbar { display: flex; height: 25px; grid-column: 1 / 2; }
.hbtn { width: 25px; background: #f0f0f0; border: 1px solid; border-color: #fff #8c8c8c #8c8c8c #fff; display: flex; align-items: center; justify-content: center; flex: none; }
.hatch-h { width: 52px; background: repeating-conic-gradient(#e4e4e4 0 25%, #f7f7f7 0 50%) 0 0 / 2px 2px; flex: none; }
.hatch-h.right { width: 220px; }
.hthumb { flex: 1; background: #f0f0f0; border: 1px solid; border-color: #fff #8c8c8c #8c8c8c #fff; }

.bird { width: 102px; margin-left: 10px; flex: none; display: flex; flex-direction: column; padding-bottom: 3px; }
.bird-head { border-bottom: 0; height: 27px; padding: 0 4px 0 3px; gap: 1px; font-size: 15.5px; }
.bird-title { width: 60px; overflow: hidden; white-space: nowrap; margin-right: 6px; }
.birdbox { flex: 1; background: #fff; border: 1px solid #111; border-left-width: 2px; border-bottom-width: 2px; margin-right: 2px; box-shadow: -1px 0 0 #999; }

.statusbar { height: 33px; flex: none; display: flex; align-items: stretch; font-size: 16px; }
.status-msg { width: 380px; display: flex; align-items: center; padding-left: 2px; background: #f3f3f3; border: 1px solid; border-color: #ccc #fff #fff #ccc; white-space: nowrap; font-size: 16.9px; }
.status-zoom { margin-left: 681px; width: 682px; display: flex; align-items: center; justify-content: flex-end; border-left: 1px solid #aaa; border-top: 1px solid #aaa; }
.pct { margin-right: 11px; }
.fitbox { display: flex; align-items: center; justify-content: space-around; width: 100px; height: 30px; border: 1px solid; border-color: #fff #999 #999 #fff; padding: 0 6px; }
.fitbox i { width: 1px; height: 18px; background: #aaa; }
.sbox { border: 1px solid #c4c4c4; border-bottom-color: #fff; border-right-color: #fff; flex: none; }
.magbox { width: 32px; margin-left: 4px; display: flex; align-items: center; justify-content: center; }
.magbox:last-child { margin-left: 3px; }
.mag { width: 23px; height: 23px; }
.slider { width: 102px; margin-left: 4px; display: flex; align-items: center; padding-left: 1px; }
.slider-minus { width: 8px; height: 2px; background: #888; }
.slider-handle { width: 15px; height: 30px; background: #f0f0f0; border: 1px solid; border-color: #fff #8c8c8c #8c8c8c #fff; }
.slider-line { width: 75px; height: 3px; background: #999; }

.taskbar { height: 72px; flex: none; display: flex; align-items: center; background: #1f1d1b; color: #f4f4f4; font-size: 17.5px; }
.weather { width: 477px; flex: none; display: flex; align-items: center; padding-left: 28px; gap: 11px; }
.w-icon { width: 37px; height: 31px; flex: none; }
.w-text { display: flex; flex-direction: column; gap: 1px; line-height: 23px; margin-top: -2px; }
.w-desc { color: #c9c9c9; }
.winlogo { width: 35px; height: 35px; flex: none; }
.searchpill { width: 329px; height: 48px; margin-left: 21px; flex: none; border-radius: 24px; background: #3e3c3a; display: flex; align-items: center; padding-left: 17px; }
.s-icon { width: 24px; height: 24px; flex: none; }
.s-text { margin-left: 14px; font-size: 19px; color: #c4c4c4; }
.s-bing { width: 28px; height: 32px; margin-left: auto; margin-right: 10px; }
.apps { display: flex; margin-left: 3px; flex: none; }
.app { width: 66px; height: 60px; display: flex; align-items: center; justify-content: center; position: relative; }
.a-i { width: 36px; height: 36px; }
.app.dotted::after { content: ""; position: absolute; left: 29px; bottom: -2px; width: 8px; height: 6px; border-radius: 3px; background: #9a9a9a; }
.app.active::before { content: ""; position: absolute; left: 3px; right: 3px; top: 0; bottom: 0; background: #33312f; border-radius: 6px; }
.app.active .a-i { position: relative; height: 30px; }
.pill { position: absolute; left: 22px; bottom: 1px; width: 23px; height: 6px; border-radius: 3px; background: #f47a5f; }
.app-badge { position: absolute; left: 38px; top: 5px; width: 22px; height: 24px; border-radius: 50%; background: #f47a5f; color: #222; font-size: 14px; display: flex; align-items: center; justify-content: center; }
.chev { width: 16px; height: 10px; margin-left: 72px; flex: none; }
.lang { width: 50px; margin-left: 24px; display: flex; flex-direction: column; align-items: center; line-height: 23px; flex: none; }
.tray-wifi { width: 24px; height: 22px; margin-left: 20px; flex: none; }
.tray-vol { width: 24px; height: 22px; margin-left: 12px; flex: none; }
.tray-bat { width: 26px; height: 26px; margin-left: 11px; flex: none; }
.clock { width: 100px; margin-left: 17px; display: flex; flex-direction: column; align-items: flex-end; line-height: 23px; flex: none; }
.notif { width: 22px; height: 24px; margin-left: 12px; border-radius: 50%; background: #f47a5f; color: #222; font-size: 14px; display: flex; align-items: center; justify-content: center; flex: none; }
.ms-letter { font: bold 13px "Liberation Sans", sans-serif; text-anchor: middle; fill: #fff; }
```
